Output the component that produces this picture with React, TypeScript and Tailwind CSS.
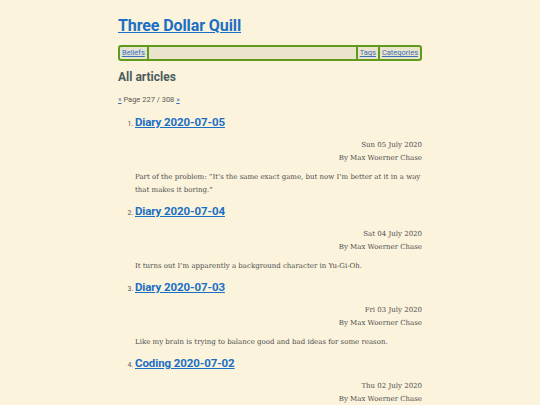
const posts = [
  {
    n: 1,
    title: "Diary 2020-07-05",
    date: "Sun 05 July 2020",
    text: "Part of the problem: \u201cIt\u2019s the same exact game, but now I\u2019m better at it in a way that makes it boring.\u201d",
  },
  {
    n: 2,
    title: "Diary 2020-07-04",
    date: "Sat 04 July 2020",
    text: "It turns out I\u2019m apparently a background character in Yu-Gi-Oh.",
  },
  {
    n: 3,
    title: "Diary 2020-07-03",
    date: "Fri 03 July 2020",
    text: "Like my brain is trying to balance good and bad ideas for some reason.",
  },
  {
    n: 4,
    title: "Coding 2020-07-02",
    date: "Thu 02 July 2020",
    text: "",
  },
];

const heading = "font-['Roboto',sans-serif]";
const body = "font-['DejaVu_Serif',serif]";

export default function App() {
  return (
    <div className="h-screen bg-[#fbf3dc] overflow-hidden">
      <div className="mx-auto w-[304px] pt-[15px]">
        <h1 className={`${heading} text-[16px] leading-[22px] font-bold tracking-[-0.1px]`}>
          <a href="#" className="text-[#1a6fc4] underline">
            Three Dollar Quill
          </a>
        </h1>

        <nav className={`${heading} mt-[8px] h-[16px] flex items-center rounded-[3px] border-2 border-[#5f9a1c] bg-[#ebe4cc] text-[7.5px] leading-none`}>
          <a href="#" className="px-[2px] text-[#3a70b8] underline bg-[#e2e2d8]">Beliefs</a>
          <span className="h-full border-l-2 border-[#5f9a1c]" />
          <span className="flex-1" />
          <span className="h-full border-l-2 border-[#5f9a1c]" />
          <a href="#" className="px-[2px] text-[#3a70b8] underline">Tags</a>
          <span className="h-full border-l-2 border-[#5f9a1c]" />
          <a href="#" className="px-[2px] text-[#3a70b8] underline">Categories</a>
        </nav>

        <h2 className={`${heading} mt-[7px] text-[12px] leading-[18px] font-bold text-[#4b5a5f]`}>
          All articles
        </h2>

        <p className={`${heading} mt-[9px] text-[7.5px] leading-[10px] text-[#5a5a5a]`}>
          <a href="#" className="text-[#3a70b8] underline">«</a> Page 227 / 308{" "}
          <a href="#" className="text-[#3a70b8] underline">»</a>
        </p>

        <ol className="mt-[8px] pl-[17px] list-decimal">
          {posts.map((p) => (
            <li key={p.n} className={`${heading} text-[7px] text-[#5a5a5a] marker:text-[7px] mb-[5px]`}>
              <h3 className="text-[11.5px] leading-[18px] font-bold tracking-[-0.1px]">
                <a href="#" className="text-[#1a6fc4] underline">{p.title}</a>
              </h3>
              <div className={`${body} mt-[8px] text-right text-[7px] leading-[13px] text-[#4e4e4e]`}>
                <div>{p.date}</div>
                <div>By Max Woerner Chase</div>
              </div>
              {p.text && (
                <p className={`${body} mt-[6px] text-[7px] leading-[13px] text-[#4e4e4e]`}>{p.text}</p>
              )}
            </li>
          ))}
        </ol>
      </div>
    </div>
  );
}
